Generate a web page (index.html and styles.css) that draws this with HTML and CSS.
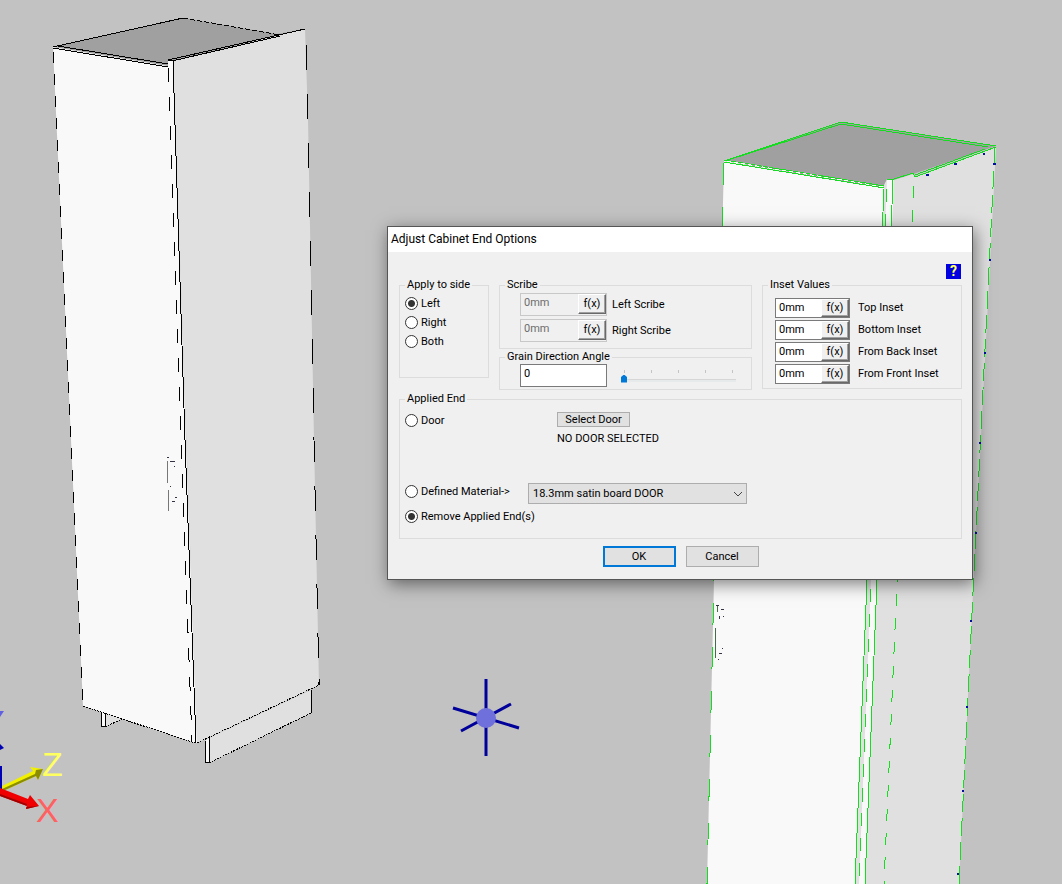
FILE: index.html
```html
<!DOCTYPE html>
<html lang="en">
<head>
	<meta charset="UTF-8">
	<meta name="viewport" content="width=device-width, initial-scale=1.0">
	<title>Adjust Cabinet End Options</title>
	<link rel="stylesheet" href="styles.css">
</head>
<body>
	<svg class="scene" viewBox="0 0 1062 884" preserveAspectRatio="xMinYMin slice" aria-hidden="true">
		<!-- Left cabinet -->
		<g class="cabinet">
			<polygon class="face-top" points="53,47 183,18 277,34 305,29 173,61 168,66"/>
			<polygon class="face-side" points="173,61 305,29 308,120 314,440 319,685 197,743"/>
			<polygon class="face-front" points="53,47 168,66 168,60 173,60 186,440 197,743 192,742 83,706 71,440"/>
			<polygon class="face-front" points="101,712 105,713 105,727 101,726"/>
			<polygon class="face-side" points="105,713 122,719 105,727"/>
			<polygon class="face-front" points="205,741 209,738 209,763 205,762"/>
			<polygon class="face-side" points="209,738 311,690 311,713 209,763"/>
			<path d="M53 47L183 18M168 60L305 29M172 61L280 36M53 48L168 67M58 46L168 64M168 60H173"/>
			<path stroke-dasharray="5 2" d="M183 18L280 35"/>
			<path stroke-dasharray="2 1" d="M83 706L192 742L197 743L319 685M209 763L311 713M105 727L122 719"/>
			<path stroke-dasharray="11 11" stroke-dashoffset="-4" d="M53 48L71 440L83 706"/>
			<path stroke-dasharray="14 15" stroke-dashoffset="-2" d="M168 66L181 440L192 742"/>
			<path d="M173 61L185 440L196 742M101 713V726H105V713M205 741V762H209V738M311 690V713M319 679V685"/>
			<path stroke-dasharray="25 24" stroke-dashoffset="-15" d="M306 30L308 120L314 440L319 685"/>
			<path class="grip" d="M167 461V483M168 490V511"/>
			<path class="grip-dots" d="M167 457h2M170 461h5M174 466h1M170 486h1M175 497h2M172 501h3"/>
		</g>

		<!-- Right cabinet, selected -->
		<g class="cabinet selected">
			<polygon class="face-top" points="724,161 841,122 996,146 913,174 890,182 884,189"/>
			<polygon class="face-side" points="882,189 887,179 894,180 913,174 915,177 996,147 974,572 959,884 855,884"/>
			<polygon class="face-front" points="724,161 884,188 867,580 855,884 707,884 714,580"/>
			<polygon class="face-front" points="887,179 894,179 877,580 865,884 859,884 871,580"/>
			<path d="M724 161L841 122L996 146M728 160L841 124L988 147M724 160L884 186M724 162L884 188M894 179L913 173L915 177L996 147M887 179H894M915 175L985 149"/>
			<path class="edge-light" stroke-dasharray="4 3" d="M727 161L884 187"/>
			<path d="M884 189L867 580L855 884M893 180L877 580L865 884"/>
			<path stroke-dasharray="13 12" d="M887 189L871 580L859 884"/>
			<path stroke-dasharray="12 12" stroke-dashoffset="-10" d="M914 176L897 583L884 884"/>
			<path stroke-dasharray="22 22" stroke-dashoffset="-7" d="M724 156L714 580L707 884"/>
			<path stroke-dasharray="18 6" d="M995 147L974 572L959 884"/>
			<path class="grip" d="M715 628V658M717 605V612"/>
			<path class="grip-dots" d="M716 605h3M721 609h3M719 616v3M723 616h1M722 648h1M719 653h3M718 659h1"/>
			<path class="pins" d="M926 175h3M954 164h3M983 154h2M993 164h3M989 260h2M984 353h2M979 443h2M975 533h2M970 621h2M966 707h2M962 791h2M957 874h2"/>
		</g>

		<!-- Origin marker -->
		<g class="origin">
			<path d="M486 679V756M453 708L519 728M511 704L461 731"/>
			<circle cx="486" cy="718" r="10"/>
		</g>

		<!-- Axes -->
		<g class="axes">
			<path class="axis-y" d="M0 766H2V789H0zM0 744L4 748L0 750z"/>
			<path class="axis-y-tip" d="M0 711H4L0 717z"/>
			<path class="axis-z" d="M2 786L33 771L30 767L43 769L38 780L36 776L3 791z"/>
			<path class="axis-z-shade" d="M3 791L36 776L38 780L43 769L36 770L35 774L2 789z"/>
			<path class="axis-x" d="M0 788L28 799L30 795L39 806L26 809L27 806L0 796z"/>
			<path class="axis-x-shade" d="M0 794L27 804L26 809L39 806L26 807L27 806L0 796z"/>
			<text class="label-z" x="42" y="776">Z</text>
			<text class="label-x" x="36" y="822">X</text>
		</g>
	</svg>

	<form class="dialog" role="dialog" aria-labelledby="dialogTitle">
		<h1 class="dialog-title" id="dialogTitle">Adjust Cabinet End Options</h1>
		<div class="dialog-body">
			<div class="help-row">
				<button type="button" class="help" aria-label="Help">?</button>
			</div>

			<div class="groups">
				<fieldset class="group side-group">
					<legend>Apply to side</legend>
					<div class="side-list">
						<label class="radio"><input type="radio" name="side" checked>Left</label>
						<label class="radio"><input type="radio" name="side">Right</label>
						<label class="radio"><input type="radio" name="side">Both</label>
					</div>
				</fieldset>

				<div class="middle">
					<fieldset class="group">
						<legend>Scribe</legend>
						<div class="scribe-list">
							<div class="field">
								<span class="formula large off"><input type="text" id="leftScribe" value="0mm" disabled><button type="button">f(x)</button></span>
								<label for="leftScribe">Left Scribe</label>
							</div>
							<div class="field">
								<span class="formula large off"><input type="text" id="rightScribe" value="0mm" disabled><button type="button">f(x)</button></span>
								<label for="rightScribe">Right Scribe</label>
							</div>
						</div>
					</fieldset>
					<fieldset class="group">
						<legend><label for="grainAngle">Grain Direction Angle</label></legend>
						<div class="grain">
							<input type="text" class="angle" id="grainAngle" value="0">
							<div class="slider">
								<div class="ticks"><i></i><i></i><i></i><i></i><i></i></div>
								<input type="range" min="0" max="360" value="0" aria-label="Grain Direction Angle">
							</div>
						</div>
					</fieldset>
				</div>

				<fieldset class="group">
					<legend>Inset Values</legend>
					<div class="inset-list">
						<div class="field">
							<span class="formula"><input type="text" id="topInset" value="0mm"><button type="button">f(x)</button></span>
							<label for="topInset">Top Inset</label>
						</div>
						<div class="field">
							<span class="formula"><input type="text" id="bottomInset" value="0mm"><button type="button">f(x)</button></span>
							<label for="bottomInset">Bottom Inset</label>
						</div>
						<div class="field">
							<span class="formula"><input type="text" id="backInset" value="0mm"><button type="button">f(x)</button></span>
							<label for="backInset">From Back Inset</label>
						</div>
						<div class="field">
							<span class="formula"><input type="text" id="frontInset" value="0mm"><button type="button">f(x)</button></span>
							<label for="frontInset">From Front Inset</label>
						</div>
					</div>
				</fieldset>
			</div>

			<fieldset class="group">
				<legend>Applied End</legend>
				<div class="applied">
					<div class="door-row">
						<label class="radio"><input type="radio" name="applied">Door</label>
						<div class="door-pick">
							<button type="button" class="btn small">Select Door</button>
							<span>NO DOOR SELECTED</span>
						</div>
					</div>
					<div class="material-row">
						<label class="radio"><input type="radio" name="applied">Defined Material-&gt;</label>
						<div class="select">
							<select aria-label="Defined Material">
								<option>18.3mm satin board DOOR</option>
							</select>
							<svg viewBox="0 0 10 6" aria-hidden="true"><path d="M1 1L5 5L9 1"/></svg>
						</div>
					</div>
					<label class="radio"><input type="radio" name="applied" checked>Remove Applied End(s)</label>
				</div>
			</fieldset>

			<div class="actions">
				<button type="button" class="btn default">OK</button>
				<button type="button" class="btn">Cancel</button>
			</div>
		</div>
	</form>
</body>
</html>
```

FILE: styles.css
```css
* {
	box-sizing: border-box;
}
body {
	margin: 0;
	min-height: 100vh;
	position: relative;
	overflow: hidden;
	background: #c2c2c2;
	color: #000;
	font: 11px/14px Roboto, "Liberation Sans", sans-serif;
}
button, input, select {
	font: inherit;
	color: inherit;
	margin: 0;
	padding: 0;
	border-radius: 0;
}

/* 3D view */
.scene {
	position: absolute;
	inset: 0;
	width: 100%;
	height: 100%;
}
.face-top {
	fill: #a0a0a0;
}
.face-front {
	fill: #f9f9f9;
}
.face-side {
	fill: #e0e0e0;
}
.cabinet path {
	fill: none;
	stroke: #000;
	shape-rendering: crispEdges;
}
.cabinet.selected path {
	stroke: #14dc1e;
}
.cabinet.selected .edge-light {
	stroke: #f4fff4;
}
.cabinet .grip {
	stroke: #777;
}
.cabinet .grip-dots, .cabinet.selected .grip-dots {
	stroke: #334;
}
.cabinet.selected .grip {
	stroke: #456b48;
}
.cabinet.selected .pins {
	stroke: #00109a;
	stroke-width: 2;
}
.origin path {
	fill: none;
	stroke: #00009a;
	stroke-width: 3;
}
.origin circle {
	fill: #7070dc;
}
.axis-y {
	fill: #0000b4;
}
.axis-y-tip {
	fill: #6060e0;
}
.axis-z {
	fill: #f0f000;
}
.axis-z-shade {
	fill: #8c8c00;
}
.axis-x {
	fill: #f00000;
}
.axis-x-shade {
	fill: #a00000;
}
.axes text {
	font-family: "Liberation Sans", sans-serif;
	font-size: 34px;
}
.label-z {
	fill: #ffff60;
}
.label-x {
	fill: #ff6060;
}

/* Dialog window */
.dialog {
	position: absolute;
	left: 387px;
	top: 226px;
	width: 586px;
	background: #f0f0f0;
	border: 1px solid #555;
	box-shadow: 2px 4px 16px rgba(0, 0, 0, 0.5);
}
.dialog-title {
	margin: 0;
	padding: 0 3px;
	background: #fff;
	font-size: 12px;
	font-weight: normal;
	line-height: 25px;
}
.dialog-body {
	padding: 12px 10px 12px 11px;
}
.help-row {
	display: flex;
	justify-content: flex-end;
	padding-right: 1px;
}
.help {
	width: 15px;
	height: 15px;
	border: 0;
	background: #0000e0;
	color: #ffff60;
	font-weight: bold;
	font-size: 14px;
	line-height: 15px;
}
.groups {
	display: grid;
	grid-template-columns: 90px 1fr 200px;
	gap: 10px;
	align-items: start;
	margin-bottom: 3px;
}
.group {
	min-width: 0;
	margin: 0;
	padding: 0;
	border: 1px solid #dcdcdc;
}
.group legend {
	margin-left: 5px;
	padding: 0 2px;
	line-height: 12px;
}
.middle {
	display: flex;
	flex-direction: column;
	gap: 2px;
}

.radio {
	display: flex;
	align-items: center;
	gap: 3px;
	height: 19px;
	white-space: nowrap;
}
.radio input {
	appearance: none;
	width: 13px;
	height: 13px;
	border: 1px solid #333;
	border-radius: 50%;
	background: #fff;
}
.radio input:checked {
	background: radial-gradient(circle, #333 3px, #fff 4px);
}
.side-list {
	padding: 3px 5px 26px;
}

.field {
	display: flex;
	align-items: center;
	gap: 8px;
	white-space: nowrap;
}
.formula {
	display: flex;
	width: 75px;
	height: 20px;
	border: 1px solid #7a7a7a;
	background: #fff;
}
.formula input {
	flex: 1;
	min-width: 0;
	padding-left: 3px;
	border: 0;
	background: transparent;
}
.formula button {
	width: 28px;
	border: 1px solid;
	border-color: #fff #696969 #696969 #fff;
	box-shadow: inset -1px -1px #a0a0a0;
	background: #f0f0f0;
	line-height: 14px;
}
.formula.large {
	width: 87px;
	height: 23px;
}
.formula.off {
	border-color: #c8c8c8;
	background: #f0f0f0;
}
.formula.off input {
	padding-bottom: 4px;
	color: #6d6d6d;
}
.formula.large button {
	height: 20px;
}
.scribe-list {
	display: grid;
	gap: 3px;
	padding: 2px 0 6px 20px;
}
.scribe-list .field {
	gap: 5px;
}
.inset-list {
	display: grid;
	gap: 2px;
	padding: 7px 0 4px 12px;
}

.grain {
	display: flex;
	gap: 14px;
	padding: 1px 15px 2px 20px;
}
.angle {
	width: 87px;
	height: 23px;
	padding: 0 3px 4px;
	border: 1px solid #7a7a7a;
	background: #fff;
}
.slider {
	flex: 1;
	padding-top: 6px;
}
.ticks {
	display: flex;
	justify-content: space-between;
	height: 4px;
	padding: 0 3px;
}
.ticks i {
	width: 1px;
	height: 3px;
	background: #c4c4c4;
}
.slider input {
	appearance: none;
	display: block;
	width: 100%;
	height: 9px;
	background: linear-gradient(#d6d6d6, #d6d6d6) 0 5px / 100% 1px no-repeat, linear-gradient(#e7eaea, #e7eaea) 0 6px / 100% 2px no-repeat;
}
.slider input::-webkit-slider-thumb {
	appearance: none;
	width: 6px;
	height: 8px;
	background: #0078d7;
	clip-path: polygon(50% 0, 100% 30%, 100% 100%, 0 100%, 0 30%);
}

.applied {
	padding: 6px 5px 12px;
}
.door-row {
	display: flex;
	min-height: 71px;
}
.door-row .radio {
	width: 152px;
}
.door-pick {
	display: flex;
	flex-direction: column;
	align-items: flex-start;
	gap: 4px;
	padding-top: 1px;
	line-height: 16px;
}
.material-row {
	display: flex;
	align-items: flex-end;
	height: 22px;
	margin-bottom: 3px;
}
.material-row .radio {
	align-self: flex-start;
	width: 123px;
}
.select {
	position: relative;
	width: 219px;
}
.select select {
	appearance: none;
	display: block;
	width: 100%;
	height: 21px;
	padding-left: 4px;
	border: 1px solid #adadad;
	background: #e1e1e1;
}
.select svg {
	position: absolute;
	right: 4px;
	top: 8px;
	width: 10px;
	height: 6px;
	fill: none;
	stroke: #444;
	pointer-events: none;
}

.btn {
	width: 73px;
	height: 21px;
	border: 1px solid #adadad;
	background: #e1e1e1;
}
.btn.small {
	height: 15px;
	line-height: 13px;
}
.btn.default {
	border: 2px solid #0078d7;
}
.actions {
	display: flex;
	justify-content: center;
	gap: 10px;
	margin-top: 7px;
}
```
